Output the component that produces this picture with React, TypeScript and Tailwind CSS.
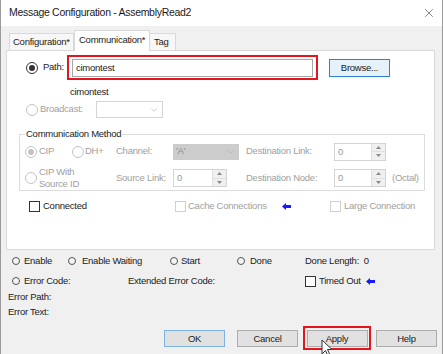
import { X, ChevronDown } from 'lucide-react';

function Radio({ checked, disabled }: { checked?: boolean; disabled?: boolean }) {
  return (
    <span
      className={`flex h-[12px] w-[12px] shrink-0 items-center justify-center rounded-full border bg-white ${
        disabled ? 'border-[#c4c4c4]' : 'border-[#333333]'
      }`}
    >
      {checked && (
        <span className={`h-[6px] w-[6px] rounded-full ${disabled ? 'bg-[#c4c4c4]' : 'bg-[#333333]'}`} />
      )}
    </span>
  );
}

function StatusLed() {
  return (
    <span className="h-[8px] w-[8px] shrink-0 rounded-full border border-[#555555] bg-[#f4f4f4]" />
  );
}

function Checkbox({ disabled }: { disabled?: boolean }) {
  return (
    <span
      className={`h-[11px] w-[11px] shrink-0 border bg-white ${
        disabled ? 'border-[#d0d0d0]' : 'border-[#333333]'
      }`}
    />
  );
}

function BlueArrow() {
  return (
    <svg width="9" height="7" viewBox="0 0 9 7" className="shrink-0">
      <polygon points="0,3.5 4,0 4,2 9,2 9,5 4,5 4,7" fill="#1a1aff" />
    </svg>
  );
}

function SpinBox({ w }: { w: string }) {
  return (
    <div className={`flex h-[18px] ${w} shrink-0 border border-[#d4d4d4] bg-white`}>
      <span className="flex-1 pl-[3px] leading-[16px] text-[#9a9a9a]">0</span>
      <div className="flex w-[14px] flex-col border-l border-[#e0e0e0] bg-[#f0f0f0]">
        <span className="flex flex-1 items-center justify-center border-b border-[#e0e0e0]">
          <svg width="5" height="3" viewBox="0 0 5 3">
            <polygon points="0,3 2.5,0 5,3" fill="#8a8a8a" />
          </svg>
        </span>
        <span className="flex flex-1 items-center justify-center">
          <svg width="5" height="3" viewBox="0 0 5 3">
            <polygon points="0,0 2.5,3 5,0" fill="#8a8a8a" />
          </svg>
        </span>
      </div>
    </div>
  );
}

function Button({ label, primary }: { label: string; primary?: boolean }) {
  return (
    <button
      className={`h-[17px] w-[61px] border bg-[#e1e1e1] text-center text-[9.5px] leading-[15px] tracking-[-0.25px] text-[#222222] ${
        primary ? 'border-[#7fb2e5]' : 'border-[#adadad]'
      }`}
    >
      {label}
    </button>
  );
}

export default function App() {
  return (
    <div className="relative flex h-[354px] w-[443px] flex-col overflow-hidden border-x border-[#9a9a9a] bg-[#f0f0f0] font-['Liberation_Sans',Arial,sans-serif] text-[9.5px] tracking-[-0.25px] text-[#222222]">
      {/* title bar */}
      <div className="flex h-[26px] shrink-0 items-center justify-between bg-white pl-[8px] pr-[6px]">
        <span className="text-[10.5px] tracking-[-0.3px] text-[#1a1a1a]">Message Configuration - AssemblyRead2</span>
        <X size={14} strokeWidth={1} className="text-[#333333]" />
      </div>

      {/* tabs */}
      <div className="mt-[4px] ml-[5px] w-[429px]">
        <div className="flex h-[20px] items-end pl-[3px]">
          <div className="h-[17px] w-[65px] border border-b-0 border-[#d9d9d9] bg-[#f7f7f7] pl-[3px] leading-[16px]">
            Configuration*
          </div>
          <div className="relative z-10 -mb-px h-[21px] w-[76px] border border-b-0 border-[#d9d9d9] bg-white pl-[4px] leading-[18px]">
            Communication*
          </div>
          <div className="h-[17px] w-[26px] border border-b-0 border-l-0 border-[#d9d9d9] bg-[#f7f7f7] pl-[4px] leading-[16px]">
            Tag
          </div>
        </div>

        {/* tab panel */}
        <div className="flex h-[200px] flex-col border border-[#d9d9d9] bg-white">
          {/* path */}
          <div className="mt-[4px] flex h-[25px] items-center pl-[19px]">
            <Radio checked />
            <span className="w-[29px] shrink-0 pl-[5px]">Path:</span>
            <div className="flex h-[25px] w-[251px] shrink-0 items-center border-2 border-[#e3161e] pl-[3px]">
              <div className="h-[18px] w-[241px] border border-[#a8a8a8] bg-white pl-[3px] leading-[16px]">
                cimontest
              </div>
            </div>
            <button className="ml-[11px] h-[18px] w-[61px] border border-[#2f7fd2] bg-[#e5f1fb] text-[9.5px] leading-[16px] tracking-[-0.25px] text-[#222222]">
              Browse...
            </button>
          </div>
          <div className="mt-[6px] h-[12px] pl-[63px] leading-[12px]">cimontest</div>

          {/* broadcast */}
          <div className="mt-[3px] flex h-[17px] items-center pl-[19px]">
            <Radio disabled />
            <span className="w-[58px] shrink-0 pl-[2px] text-[#a0a0a0]">Broadcast:</span>
            <div className="flex h-[17px] w-[67px] items-center justify-end border border-[#d4d4d4] bg-white pr-[3px]">
              <ChevronDown size={10} strokeWidth={1.2} className="text-[#a0a0a0]" />
            </div>
          </div>

          {/* communication method */}
          <fieldset className="mt-[10px] ml-[12px] w-[406px] border border-[#dcdcdc]">
            <legend className="ml-[5px] px-[1px] leading-[12px]">Communication Method</legend>
            <div className="mt-[3px] flex h-[17px] items-center pl-[5px] text-[#a0a0a0]">
              <Radio checked disabled />
              <span className="w-[35px] shrink-0 pl-[2px]">CIP</span>
              <Radio disabled />
              <span className="w-[32px] shrink-0 pl-[1px]">DH+</span>
              <span className="w-[57px] shrink-0">Channel:</span>
              <div className="flex h-[16px] w-[66px] shrink-0 items-center justify-between bg-[#cccccc] pr-[3px] pl-[3px] text-[#8c8c8c]">
                'A'
                <ChevronDown size={10} strokeWidth={1.2} className="text-[#a8a8a8]" />
              </div>
              <span className="w-[95px] shrink-0 pl-[7px]">Destination Link:</span>
              <SpinBox w="w-[52px]" />
            </div>
            <div className="mt-[6px] flex h-[24px] items-center pl-[5px] text-[#a0a0a0]">
              <Radio disabled />
              <span className="w-[79px] shrink-0 pl-[2px] leading-[12px]">
                CIP With
                <br />
                Source ID
              </span>
              <span className="w-[57px] shrink-0">Source Link:</span>
              <SpinBox w="w-[54px]" />
              <span className="w-[107px] shrink-0 pl-[19px]">Destination Node:</span>
              <SpinBox w="w-[52px]" />
              <span className="pl-[6px]">(Octal)</span>
            </div>
          </fieldset>

          {/* connection options */}
          <div className="mt-[9px] flex h-[13px] items-center pl-[22px]">
            <Checkbox />
            <span className="w-[135px] shrink-0 pl-[3px]">Connected</span>
            <Checkbox disabled />
            <span className="w-[96px] shrink-0 pl-[2px] text-[#a0a0a0]">Cache Connections</span>
            <BlueArrow />
            <span className="w-[39px] shrink-0" />
            <Checkbox disabled />
            <span className="pl-[3px] text-[#a0a0a0]">Large Connection</span>
          </div>
        </div>
      </div>

      {/* status */}
      <div className="mt-[5px] flex h-[12px] items-center pl-[11px] leading-[12px]">
        <StatusLed />
        <span className="w-[48px] shrink-0 pl-[4px]">Enable</span>
        <StatusLed />
        <span className="w-[94px] shrink-0 pl-[6px]">Enable Waiting</span>
        <StatusLed />
        <span className="w-[59px] shrink-0 pl-[3px]">Start</span>
        <StatusLed />
        <span className="w-[60px] shrink-0 pl-[5px]">Done</span>
        <span>Done Length:&nbsp;&nbsp;0</span>
      </div>
      <div className="mt-[8px] flex h-[12px] items-center pl-[11px] leading-[12px]">
        <StatusLed />
        <span className="w-[108px] shrink-0 pl-[4px]">Error Code:</span>
        <span className="w-[177px] shrink-0">Extended Error Code:</span>
        <Checkbox />
        <span className="pl-[3px] pr-[5px]">Timed Out</span>
        <BlueArrow />
      </div>
      <div className="mt-[4px] h-[12px] pl-[7px] leading-[12px]">Error Path:</div>
      <div className="mt-[3px] h-[12px] pl-[7px] leading-[12px]">Error Text:</div>

      {/* buttons */}
      <div className="mt-[8px] flex h-[24px] items-center justify-end gap-[5px] pr-[5px]">
        <Button label="OK" primary />
        <span className="w-[2px]" />
        <Button label="Cancel" />
        <div className="flex h-[24px] w-[68px] items-center justify-center border-2 border-[#e3161e]">
          <Button label="Apply" />
        </div>
        <Button label="Help" />
      </div>

      {/* mouse cursor */}
      <svg width="12" height="18" viewBox="0 0 12 18" className="absolute left-[320px] top-[339px]">
        <polygon points="1,1 1,15 4.5,11.5 7,17 9,16 6.5,10.5 11,10.5" fill="white" stroke="#333" strokeWidth="1" />
      </svg>
    </div>
  );
}
